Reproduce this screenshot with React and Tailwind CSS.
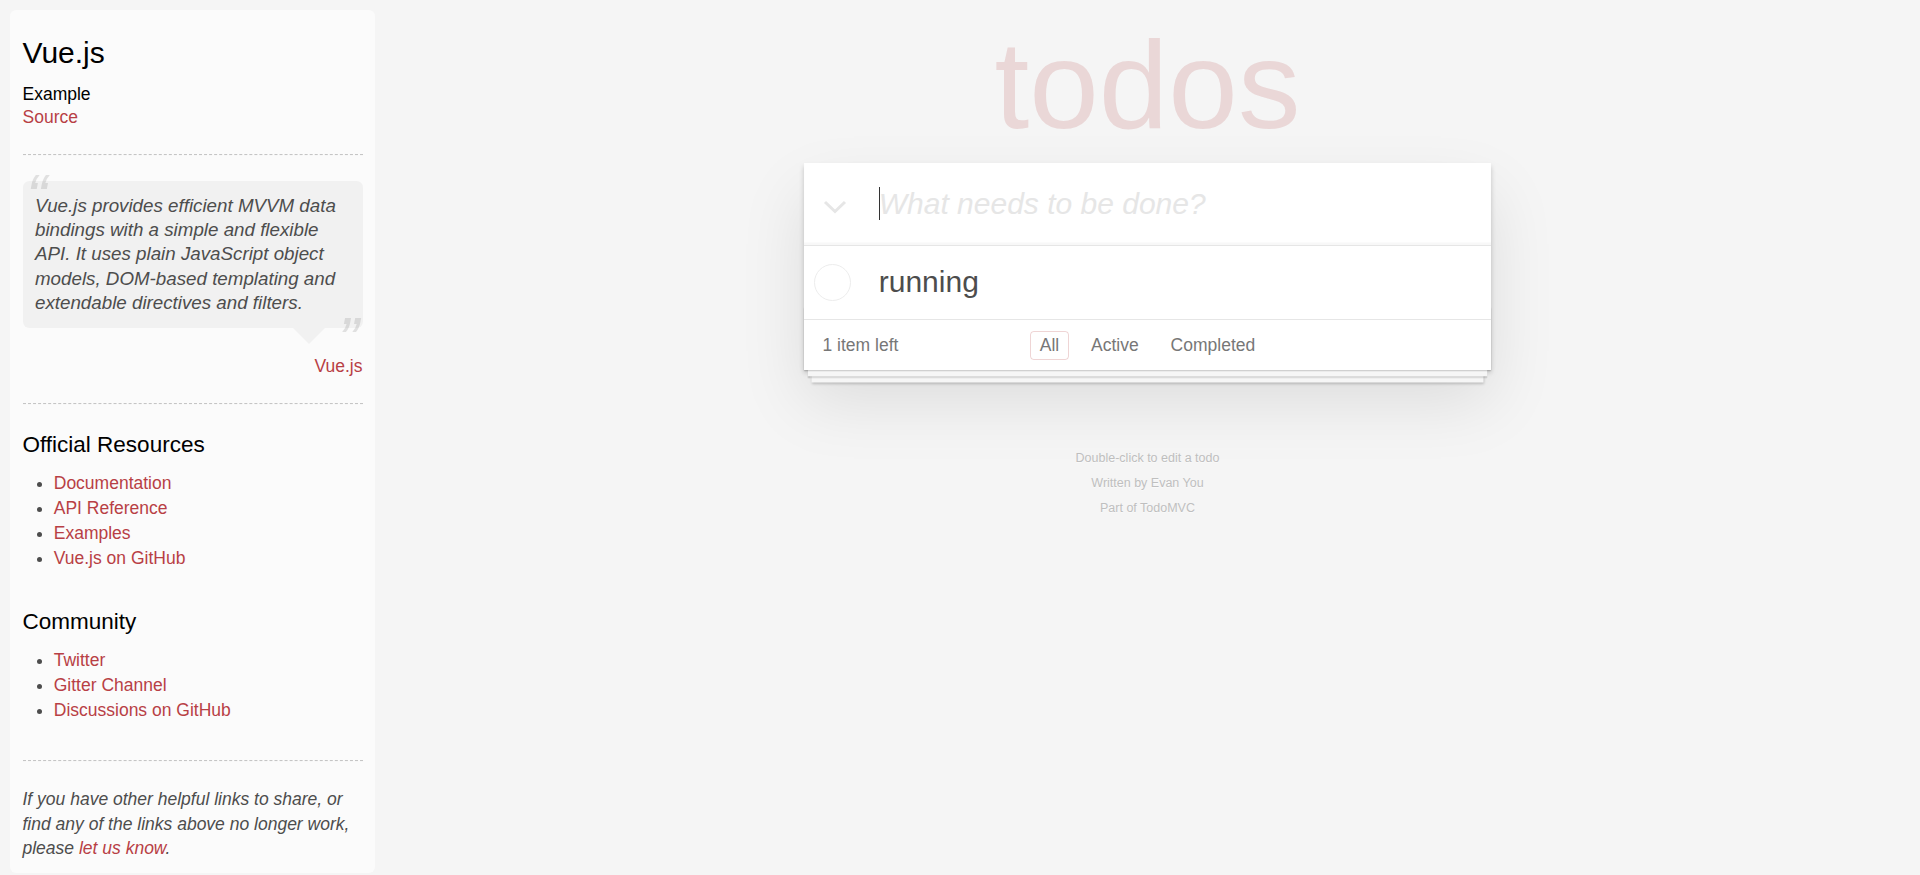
import React from 'react';

const officialLinks = ['Documentation', 'API Reference', 'Examples', 'Vue.js on GitHub'];
const communityLinks = ['Twitter', 'Gitter Channel', 'Discussions on GitHub'];

function Rule() {
  return <div className="h-0 border-t border-b border-dashed border-t-[#c5c5c5] border-b-[#f7f7f7]" />;
}

function LinkList({ items }) {
  return (
    <ul className="ml-[31.25px] list-disc">
      {items.map(label => (
        <li key={label} className="leading-[25px]">
          <a href="#" className="text-[#b83f45]">{label}</a>
        </li>
      ))}
    </ul>
  );
}

function Learn() {
  return (
    <aside className="ml-[10px] mt-[10px] w-[365px] shrink-0 rounded-[6.25px] bg-[#fbfbfb] p-[12.5px] text-[17.5px] leading-[24.5px]">
      <h3 className="mt-[12.5px] text-[30px] leading-[36px] text-black">Vue.js</h3>
      <h5 className="mt-[12.5px] text-[17.5px] leading-[21px] text-black">Example</h5>
      <a href="#" className="block leading-[24.5px] text-[#b83f45]">Source</a>

      <div className="mt-[25px]"><Rule /></div>

      <div className="relative mt-[25px] rounded-[6.25px] bg-[rgba(0,0,0,0.04)] p-[12.5px]">
        <span className="absolute left-[3.75px] top-[-25px] text-[62.5px] italic leading-[81.25px] opacity-15">“</span>
        <p className="text-[18.75px] italic leading-[24.375px]">
          Vue.js provides efficient MVVM data bindings with a simple and flexible API. It uses plain JavaScript object models, DOM-based templating and extendable directives and filters.
        </p>
        <span className="absolute bottom-[-52.5px] right-[3.75px] text-[62.5px] italic leading-[81.25px] opacity-15">”</span>
        <div className="absolute right-[37.5px] top-full h-0 w-0 border-[16.25px] border-transparent border-t-[rgba(0,0,0,0.04)]" />
      </div>
      <div className="mt-[26px] text-right leading-[24.5px]">
        <a href="#" className="text-[#b83f45]">Vue.js</a>
      </div>

      <div className="mt-[24.5px]"><Rule /></div>

      <h4 className="mt-[26.5px] text-[22.5px] leading-[27px] text-black">Official Resources</h4>
      <div className="mt-[12.5px]"><LinkList items={officialLinks} /></div>

      <h4 className="mt-[37.5px] text-[22.5px] leading-[27px] text-black">Community</h4>
      <div className="mt-[12.5px]"><LinkList items={communityLinks} /></div>

      <div className="mt-[37.5px]"><Rule /></div>
      <p className="mt-[25px] italic leading-[24.5px]">
        If you have other helpful links to share, or find any of the links above no longer work, please{' '}
        <a href="#" className="text-[#b83f45]">let us know</a>.
      </p>
    </aside>
  );
}

function TodoApp() {
  return (
    <section className="relative w-[687.5px] bg-white shadow-[0_2.5px_5px_0_rgba(0,0,0,0.2),0_31.25px_62.5px_0_rgba(0,0,0,0.1)]">
      <header className="relative">
        <svg className="absolute left-[19px] top-[37px]" width="24" height="14" viewBox="0 0 24 14" fill="none">
          <polyline points="2,2 12,11.5 22,2" stroke="#e6e6e6" strokeWidth="3" />
        </svg>
        <span className="absolute left-[75px] top-[24.5px] h-[33px] w-px bg-[#333]" />
        <input
          className="block h-[82px] w-full bg-white py-[20px] pl-[75px] pr-[20px] text-[30px] leading-[42px] text-[#4d4d4d] outline-none shadow-[inset_0_-2.5px_1.25px_rgba(0,0,0,0.03)] placeholder:italic placeholder:text-[#e6e6e6]"
          placeholder="What needs to be done?"
        />
      </header>

      <ul className="border-t border-[#e6e6e6]">
        <li className="flex h-[73.5px] items-center pl-[10px]">
          <span className="h-[37px] w-[37px] shrink-0 rounded-full border border-[#ededed]" />
          <label className="pl-[28px] text-[30px] leading-[36px] text-[#4d4d4d]">running</label>
        </li>
      </ul>

      <footer className="relative border-t border-[#e6e6e6] px-[18.75px] pb-[14.5px] pt-[10.5px] text-[17.5px] text-[#777]">
        <div className="pointer-events-none absolute inset-x-0 bottom-0 h-[62.5px] overflow-hidden shadow-[0_1.25px_1.25px_rgba(0,0,0,0.2),0_10px_0_-3.75px_#f6f6f6,0_11.25px_1.25px_-3.75px_rgba(0,0,0,0.2),0_20px_0_-7.5px_#f6f6f6,0_21.25px_2.5px_-7.5px_rgba(0,0,0,0.2)]" />
        <div className="relative grid h-[24.5px] grid-cols-[1fr_auto_1fr] items-center">
          <span className="leading-[24.5px]">1 item left</span>
          <div className="flex items-center gap-[4.86px]">
            <a href="#" className="mx-[3.75px] rounded-[3.75px] border border-[rgba(175,47,47,0.2)] px-[8.75px] py-[3.75px] leading-[20px]">All</a>
            <a href="#" className="mx-[3.75px] rounded-[3.75px] border border-transparent px-[8.75px] py-[3.75px] leading-[20px]">Active</a>
            <a href="#" className="mx-[3.75px] rounded-[3.75px] border border-transparent px-[8.75px] py-[3.75px] leading-[20px]">Completed</a>
          </div>
          <span />
        </div>
      </footer>
    </section>
  );
}

export default function App() {
  return (
    <div className="flex min-h-screen items-start bg-[#f5f5f5] font-['Liberation_Sans',Arial,sans-serif] text-[#4d4d4d]">
      <Learn />
      <main className="flex flex-1 flex-col items-center pt-[22px]">
        <h1 className="mb-[15.5px] h-[125px] w-full text-center text-[125px] leading-[125px] text-[rgba(175,47,47,0.15)]">todos</h1>
        <TodoApp />
        <footer className="mt-[82px] flex flex-col items-center gap-[12.5px] text-[12.5px] leading-[12.5px] text-[#bfbfbf] [text-shadow:0_1.25px_0_rgba(255,255,255,0.5)]">
          <p>Double-click to edit a todo</p>
          <p>Written by <a href="#">Evan You</a></p>
          <p>Part of <a href="#">TodoMVC</a></p>
        </footer>
      </main>
    </div>
  );
}
